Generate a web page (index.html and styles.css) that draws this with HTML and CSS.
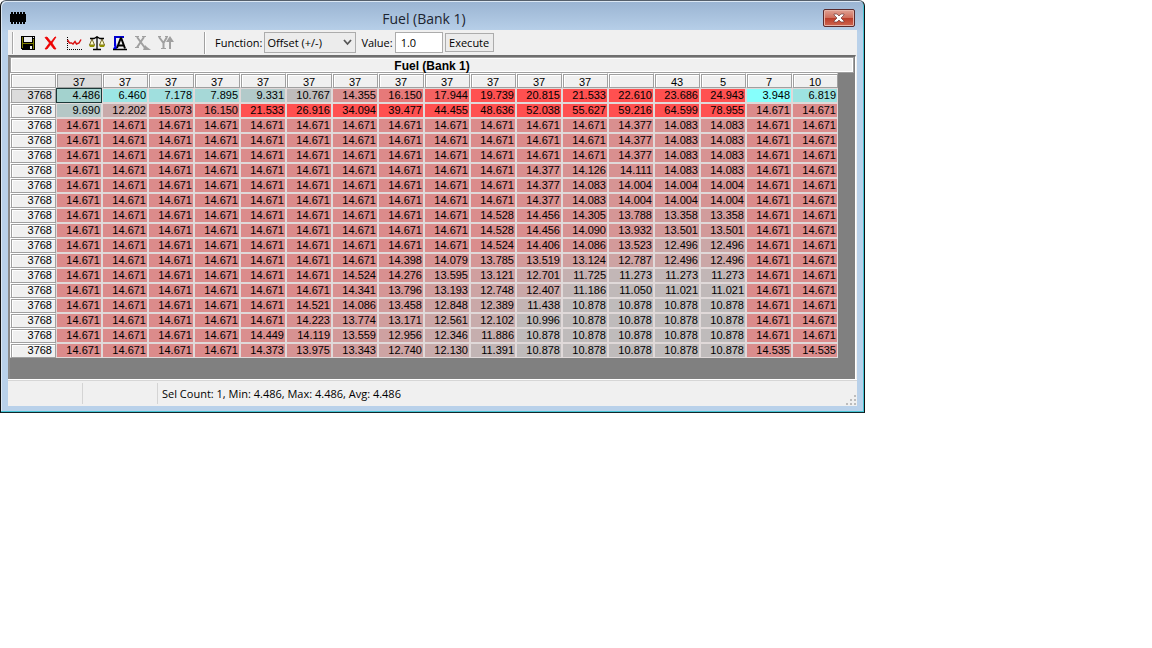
FILE: index.html
```
<!DOCTYPE html>
<html lang="en">
<head>
<meta charset="utf-8">
<title>Fuel (Bank 1)</title>
<link rel="stylesheet" href="styles.css">
</head>
<body>
<main class="window">
  <header class="titlebar">
    <svg class="chip" width="18" height="14" viewBox="0 0 18 14" shape-rendering="crispEdges" aria-hidden="true"><path d="M1 3h16v8H1zM2 1h2v12H2zM5 1h2v12H5zM8 1h2v12H8zM11 1h2v12h-2zM14 1h2v12h-2z"/></svg>
    <h1 class="title">Fuel (Bank 1)</h1>
    <button class="close" aria-label="Close"><svg width="12" height="10" viewBox="0 0 12 10" aria-hidden="true"><path d="M1 1h3l2 2 2-2h3v1L8 5l3 3v1H8L6 7 4 9H1V8l3-3-3-3z" fill="#fff" stroke="#6d3a3a" stroke-width=".7"/></svg></button>
  </header>
  <div class="client">
    <div class="toolbar">
      <div class="tools">
        <button class="tool" aria-label="Save"><svg width="16" height="16" viewBox="0 0 16 16" shape-rendering="crispEdges"><path d="M1 1h14v14H2l-1-1z"/><path d="M2 2h1v11H2zM13 4h1v10h-1zM3 8h10v1H3z" fill="#808000"/><path d="M4 2h8v5H4z" fill="#eee"/><path d="M13 2h1v1h-1zM10 11h2v3h-2z" fill="#eee"/></svg></button>
        <button class="tool" aria-label="Delete"><svg width="16" height="16" viewBox="0 0 16 16"><path d="M2 2.500 4 2l4 5 4-5h1L9 8l4 6h-2L7.500 9.500 4 14H2l4.500-6z" fill="#e00" stroke="#e00" stroke-width=".8"/></svg></button>
        <button class="tool" aria-label="Chart"><svg width="16" height="16" viewBox="0 0 16 16"><path d="M1.500 2v13M1 14.500h15" stroke="#000" stroke-dasharray="1 1" shape-rendering="crispEdges"/><path d="M1.500 5l2 3h2l1.500 1L9 6.500l1.500 2.500L13 8l2-3.500" fill="none" stroke="#d81010" stroke-width="1.500"/></svg></button>
        <button class="tool" aria-label="Compare"><svg width="18" height="16" viewBox="0 0 18 16"><path d="M4 4 1.500 10h5zM14 4l-2.500 6h5z" fill="#ffffc8" stroke="#554400" stroke-width=".8"/><path d="M1 10h6l-1 2H2zM11 10h6l-1 2h-4z" fill="#909000"/><path d="M2 3.500h4l2-1h2l2 1h4M9 1v13M5 14.500h8" fill="none" stroke="#000" stroke-width="1.300"/></svg></button>
        <button class="tool" aria-label="Scale selection"><svg width="16" height="16" viewBox="0 0 16 16"><path d="M12 2H3v9" fill="none" stroke="#0000d0" stroke-width="2"/><path d="M1 14l3-6 1 6z" fill="#00f"/><path d="M9 2.500 5 13M9 2.500l4 11M6 10.500h6" fill="none" stroke="#000" stroke-width="2"/><path d="M1 14.500h14" stroke="#000" stroke-width="1.500"/></svg></button>
        <button class="tool" aria-label="Interpolate X" disabled><svg width="16" height="16" viewBox="0 0 16 16"><path d="M2 2l8 11M9 2 2 12.500" fill="none" stroke="#a0a0a0" stroke-width="2"/><path d="M0 1h4v1H0zM7 1h4v1H7zM0 12h4v1H0zM8 15h8l-4-3-2-2z" fill="#a0a0a0"/></svg></button>
        <button class="tool" aria-label="Interpolate Y" disabled><svg width="16" height="16" viewBox="0 0 16 16"><path d="M1 2l4.500 6L9 2M5.500 7v6.500M12 14V3" fill="none" stroke="#a0a0a0" stroke-width="2"/><path d="M0 1h3v1H0zM7 1h3v1H7zM3 13h5v1H3zM12 1l4 6H8z" fill="#a0a0a0"/></svg></button>
      </div>
      <div class="params">
        <label for="fn">Function:</label>
        <span class="combo">
          <select id="fn"><option>Offset (+/-)</option></select>
          <svg class="arrow" width="9" height="7" viewBox="0 0 9 7" aria-hidden="true"><path d="M1 1l3.500 4L8 1" fill="none" stroke="#555" stroke-width="1.800"/></svg>
        </span>
        <label class="value-label" for="val">Value:</label>
        <input id="val" type="text" value="1.0">
        <button class="execute">Execute</button>
      </div>
    </div>
    <section class="pane">
      <h2 class="map-title">Fuel (Bank 1)</h2>
      <table class="map">
        <thead><tr id="axis"></tr></thead>
        <tbody id="cells"></tbody>
      </table>
    </section>
    <footer class="status">
      <span class="panel"></span><span class="panel"></span>
      <span class="summary">Sel Count: 1, Min: 4.486, Max: 4.486, Avg: 4.486</span>
      <svg class="grip" width="11" height="11" viewBox="0 0 11 11" shape-rendering="crispEdges" aria-hidden="true"><path d="M8 0h2v2H8zM4 4h2v2H4zM8 4h2v2H8zM0 8h2v2H0zM4 8h2v2H4zM8 8h2v2H8z" fill="#bcbcbc"/></svg>
    </footer>
  </div>
</main>
<script src="map.js"></script>
</body>
</html>
```
FILE: styles.css
```
body {
  margin: 0;
  background: #fff;
  font-family: "Open Sans", "Noto Sans", sans-serif;
  font-size: 11px;
  color: #000;
}
h1, h2 { margin: 0; }
button, input, select { font: inherit; color: inherit; }
.window {
  box-sizing: border-box;
  width: max-content;
  padding: 0 7px 6px 6px;
  border: 1px solid #111;
  border-top-color: #56606c;
  border-bottom-color: #10282c;
  border-radius: 6px 6px 0 0;
  background: linear-gradient(#9ab4d2, #b9d1ea 32px, #b9d1ea);
  box-shadow: inset -1px -1px #45c4d4, inset 1px 1px #dce8f4, 0 1px #7d8c8c;
}
.titlebar {
  display: grid;
  grid-template-columns: 40px 1fr 56px;
  align-items: center;
  height: 29px;
}
.chip { margin-left: 2px; margin-top: 5px; }
.title {
  padding-top: 6px;
  text-align: center;
  font-size: 14px;
  font-weight: 400;
  color: #1c2430;
}
.close {
  display: flex;
  align-items: center;
  justify-content: center;
  justify-self: end;
  width: 32px;
  height: 18px;
  margin: 5px 2px 0 0;
  padding: 0;
  border: 1px solid #592a2c;
  border-radius: 2px;
  background: linear-gradient(#e0a193, #cf6f5d 48%, #b93b28 50%, #cf6650);
  box-shadow: inset 0 0 0 1px #e6b2a6;
}
.client { margin-left: 1px; background: #f0f0f0; }
.toolbar { display: flex; align-items: center; height: 25px; }
.tools {
  display: flex;
  width: 188px;
  margin-left: 4px;
  padding-left: 3px;
  border-left: 1px solid #a8a8a8;
}
.tools, .params { box-shadow: inset 1px 0 #fff; }
.tool {
  display: flex;
  align-items: center;
  justify-content: center;
  width: 23px;
  height: 22px;
  padding: 0;
  border: 0;
  background: none;
}
.params {
  display: flex;
  align-items: center;
  gap: 2px;
  height: 22px;
  padding-left: 10px;
  border-left: 1px solid #a0a0a0;
}
.combo { display: grid; align-items: center; }
.combo select {
  grid-area: 1 / 1;
  width: 92px;
  height: 21px;
  padding: 0 2px;
  border: 1px solid #acacac;
  border-radius: 0;
  background: #ececec;
  appearance: none;
}
.arrow {
  grid-area: 1 / 1;
  justify-self: end;
  margin-right: 4px;
  pointer-events: none;
}
.value-label { padding-left: 3px; }
.params input {
  box-sizing: border-box;
  width: 48px;
  height: 21px;
  padding: 0 5px;
  border: 1px solid #acacac;
  background: #fff;
}
.execute {
  width: 49px;
  height: 19px;
  padding: 0;
  border: 1px solid #acacac;
  background: #ececec;
  line-height: 16px;
}
.pane {
  margin-right: 1px;
  padding: 0 1px 22px 0;
  border-top: 2px solid #6e6e6e;
  border-left: 2px solid #8a8a8a;
  border-right: 1px solid #fff;
  background: #808080;
}
.map-title {
  box-sizing: border-box;
  height: 16px;
  border: 1px solid #a0a0a0;
  background: #f0f0f0;
  box-shadow: inset 1px 1px #fff, inset -1px -1px #fff;
  text-align: center;
  font: bold 12px/16px "Liberation Sans", Arial, sans-serif;
}
.map {
  table-layout: fixed;
  width: 828px;
  margin-right: 16px;
  border-spacing: 0;
  font: 11px/13px "Liberation Sans", Arial, sans-serif;
}
.map th, .map td {
  box-sizing: border-box;
  width: 46px;
  height: 15px;
  padding: 0 1px 0 0;
  border: 1px solid #e0d9d9;
  text-align: right;
  font-weight: 400;
  line-height: 13px;
  white-space: nowrap;
}
.map th {
  padding-right: 3px;
  border-color: #fff #a0a0a0 #a0a0a0 #fff;
  background: #f0f0f0;
  box-shadow: inset 1px 1px #a0a0a0, inset 2px 2px #fff;
}
.map thead th { padding: 3px 0 0; text-align: center; line-height: 10px; }
.map .current { background: #dcdcdc; box-shadow: inset 1px 1px #a0a0a0; }
.map .selected { border-color: #1c3838; }
.status {
  display: flex;
  align-items: center;
  height: 25px;
  border-top: 1px solid #d6d6d6;
  box-shadow: 0 -1px #fff;
}
.panel {
  box-sizing: border-box;
  width: 75px;
  height: 21px;
  border-right: 1px solid #d4d4d4;
}
.summary { flex: 1; padding-left: 4px; }
.grip { align-self: flex-end; }
```
FILE: map.js
```
const axis = ["", ...Array(12).fill("37"), "", "43", "5", "7", "10"];
const rpm = "3768";
const rows = `
4.486 6.460 7.178 7.895 9.331 10.767 14.355 16.150 17.944 19.739 20.815 21.533 22.610 23.686 24.943 3.948 6.819
9.690 12.202 15.073 16.150 21.533 26.916 34.094 39.477 44.455 48.636 52.038 55.627 59.216 64.599 78.955 14.671 14.671
14.671 14.671 14.671 14.671 14.671 14.671 14.671 14.671 14.671 14.671 14.671 14.671 14.377 14.083 14.083 14.671 14.671
14.671 14.671 14.671 14.671 14.671 14.671 14.671 14.671 14.671 14.671 14.671 14.671 14.377 14.083 14.083 14.671 14.671
14.671 14.671 14.671 14.671 14.671 14.671 14.671 14.671 14.671 14.671 14.671 14.671 14.377 14.083 14.083 14.671 14.671
14.671 14.671 14.671 14.671 14.671 14.671 14.671 14.671 14.671 14.671 14.377 14.126 14.111 14.083 14.083 14.671 14.671
14.671 14.671 14.671 14.671 14.671 14.671 14.671 14.671 14.671 14.671 14.377 14.083 14.004 14.004 14.004 14.671 14.671
14.671 14.671 14.671 14.671 14.671 14.671 14.671 14.671 14.671 14.671 14.377 14.083 14.004 14.004 14.004 14.671 14.671
14.671 14.671 14.671 14.671 14.671 14.671 14.671 14.671 14.671 14.528 14.456 14.305 13.788 13.358 13.358 14.671 14.671
14.671 14.671 14.671 14.671 14.671 14.671 14.671 14.671 14.671 14.528 14.456 14.090 13.932 13.501 13.501 14.671 14.671
14.671 14.671 14.671 14.671 14.671 14.671 14.671 14.671 14.671 14.524 14.406 14.086 13.523 12.496 12.496 14.671 14.671
14.671 14.671 14.671 14.671 14.671 14.671 14.671 14.398 14.079 13.785 13.519 13.124 12.787 12.496 12.496 14.671 14.671
14.671 14.671 14.671 14.671 14.671 14.671 14.524 14.276 13.595 13.121 12.701 11.725 11.273 11.273 11.273 14.671 14.671
14.671 14.671 14.671 14.671 14.671 14.671 14.341 13.796 13.193 12.748 12.407 11.186 11.050 11.021 11.021 14.671 14.671
14.671 14.671 14.671 14.671 14.671 14.521 14.086 13.458 12.848 12.389 11.438 10.878 10.878 10.878 10.878 14.671 14.671
14.671 14.671 14.671 14.671 14.671 14.223 13.774 13.171 12.561 12.102 10.996 10.878 10.878 10.878 10.878 14.671 14.671
14.671 14.671 14.671 14.671 14.449 14.119 13.559 12.956 12.346 11.886 10.878 10.878 10.878 10.878 10.878 14.671 14.671
14.671 14.671 14.671 14.671 14.373 13.975 13.343 12.740 12.130 11.391 10.878 10.878 10.878 10.878 10.878 14.535 14.535
`.trim().split("\n").map(line => line.split(" "));

// Cyan at the low end, grey in the middle, red at the high end.
function heat(v) {
  const low = [134, 255, 252], mid = [190, 188, 188], high = [255, 80, 80];
  const [a, b, t] = v < 10.8
    ? [low, mid, (v - 3.948) / 6.852]
    : [mid, high, Math.min(1, (v - 10.8) / 8.6)];
  return `rgb(${a.map((c, i) => Math.round(c + (b[i] - c) * t)).join(",")})`;
}

function cell(tag, text, className) {
  const el = document.createElement(tag);
  el.textContent = text;
  if (className) el.className = className;
  return el;
}

const head = document.getElementById("axis");
axis.forEach((text, i) => head.append(cell("th", text, i === 1 ? "current" : "")));

const body = document.getElementById("cells");
rows.forEach((values, r) => {
  const tr = document.createElement("tr");
  tr.append(cell("th", rpm, r === 0 ? "current" : ""));
  values.forEach((value, c) => {
    const selected = r === 0 && c === 0;
    const td = cell("td", value, selected ? "selected" : "");
    td.style.backgroundColor = selected ? "#a3d2ce" : heat(Number(value));
    tr.append(td);
  });
  body.append(tr);
});
```
